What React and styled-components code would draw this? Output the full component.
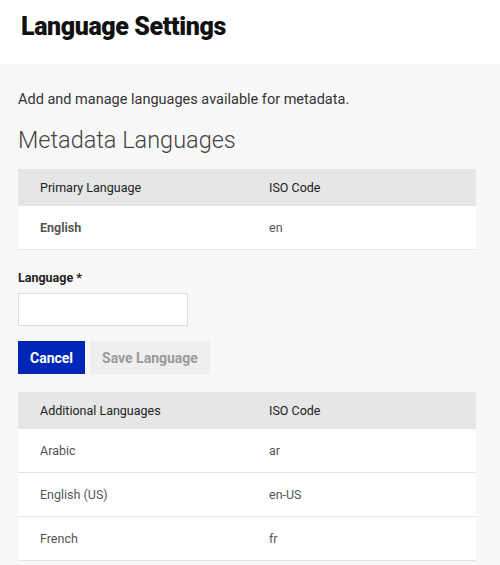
import React from 'react';
import styled, { createGlobalStyle } from 'styled-components';

const GlobalStyle = createGlobalStyle`
  html, body {
    margin: 0;
    padding: 0;
    background: #f8f8f8;
    font-family: Roboto, "Liberation Sans", sans-serif;
  }
`;

const Header = styled.header`
  box-sizing: border-box;
  background: #ffffff;
  height: 64px;
  padding: 12px 0 0 21px;
`;

const Title = styled.h1`
  margin: 0;
  font-size: 25px;
  line-height: 30px;
  font-weight: 900;
  letter-spacing: -0.4px;
  color: #111;
`;

const Main = styled.main`
  padding: 26px 24px 0 18px;
`;

const Intro = styled.p`
  margin: 0;
  font-size: 14.5px;
  color: #333;
  line-height: 20px;
`;

const SectionTitle = styled.h2`
  margin: 15px 0 14px;
  font-size: 23.5px;
  font-weight: 300;
  color: #444;
  line-height: 30px;
`;

const Table = styled.div`
  display: grid;
  grid-template-columns: 1fr 1fr;
`;

const Row = styled.div`
  display: contents;
`;

const Cell = styled.div`
  display: flex;
  align-items: center;
  padding-left: 22px;
  font-size: 12.5px;
  height: ${p => (p.$head ? '37px' : '43px')};
  background: ${p => (p.$head ? '#e5e6e6' : '#ffffff')};
  border-bottom: ${p => (p.$head ? 'none' : '1px solid #e6e6e6')};
  color: ${p => (p.$head ? '#222' : '#555')};
  font-weight: ${p => (p.$bold ? 700 : 400)};
`;

const Field = styled.div`
  margin: 20px 0 15px;
  display: flex;
  flex-direction: column;
  gap: 7px;
`;

const Label = styled.label`
  font-size: 12.5px;
  font-weight: 700;
  color: #222;
  line-height: 16px;
`;

const Input = styled.input`
  box-sizing: border-box;
  width: 170px;
  height: 33px;
  border: 1px solid #dcdcdc;
  background: #fff;
  outline: none;
`;

const Actions = styled.div`
  display: flex;
  gap: 5px;
  margin-bottom: 18px;
`;

const Button = styled.button`
  height: 33px;
  border: none;
  padding: 0 12px;
  font-family: inherit;
  font-size: 14px;
  font-weight: 700;
  background: ${p => (p.$primary ? '#0026b8' : '#efefef')};
  color: ${p => (p.$primary ? '#ffffff' : '#9a9a9a')};
  cursor: ${p => (p.$primary ? 'pointer' : 'default')};
`;

const additional = [
  { name: 'Arabic', code: 'ar' },
  { name: 'English (US)', code: 'en-US' },
  { name: 'French', code: 'fr' },
];

export default function App() {
  return (
    <>
      <GlobalStyle />
      <Header>
        <Title>Language Settings</Title>
      </Header>
      <Main>
        <Intro>Add and manage languages available for metadata.</Intro>
        <SectionTitle>Metadata Languages</SectionTitle>
        <Table>
          <Row>
            <Cell $head>Primary Language</Cell>
            <Cell $head>ISO Code</Cell>
          </Row>
          <Row>
            <Cell $bold>English</Cell>
            <Cell>en</Cell>
          </Row>
        </Table>
        <Field>
          <Label htmlFor="lang">Language *</Label>
          <Input id="lang" type="text" />
        </Field>
        <Actions>
          <Button $primary>Cancel</Button>
          <Button disabled>Save Language</Button>
        </Actions>
        <Table>
          <Row>
            <Cell $head>Additional Languages</Cell>
            <Cell $head>ISO Code</Cell>
          </Row>
          {additional.map(l => (
            <Row key={l.code}>
              <Cell>{l.name}</Cell>
              <Cell>{l.code}</Cell>
            </Row>
          ))}
        </Table>
      </Main>
    </>
  );
}
